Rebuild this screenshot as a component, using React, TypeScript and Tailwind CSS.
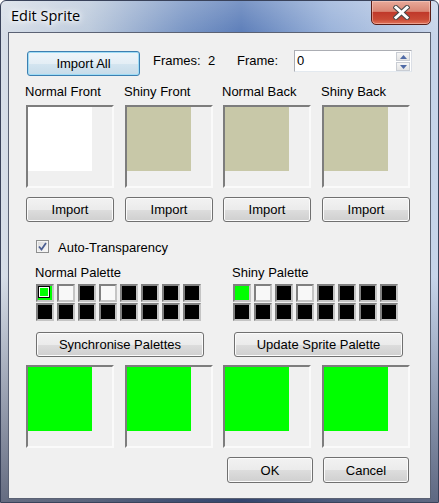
import React from "react";

const font = "font-['Liberation_Sans',Arial,sans-serif]";
const btnBase =
  "flex items-center justify-center rounded-[3px] border text-[13px] leading-[15px] text-black";
const btn = `${btnBase} border-[#707070] bg-[linear-gradient(to_bottom,#f2f2f2_0%,#ebebeb_50%,#dddddd_51%,#cfcfcf_100%)] shadow-[inset_0_0_0_1px_#fbfbfb]`;
const btnDefault = `${btnBase} border-[#3c7fb1] bg-[linear-gradient(to_bottom,#eef5fa_0%,#e4eef5_50%,#d4e5f0_51%,#c6dbe9_100%)] shadow-[inset_0_0_0_1px_#9fdcf5]`;

const columns = [
  { label: "Normal Front", top: "bg-white", ml: "ml-0" },
  { label: "Shiny Front", top: "bg-[#c8c8a8]", ml: "ml-[11px]" },
  { label: "Normal Back", top: "bg-[#c8c8a8]", ml: "ml-[10px]" },
  { label: "Shiny Back", top: "bg-[#c8c8a8]", ml: "ml-[11px]" },
];

const palette = [
  "bg-[#00ff00]", "bg-[#f8f8f8]", "bg-black", "bg-[#f8f8f8]", "bg-black", "bg-black", "bg-black", "bg-black",
  "bg-black", "bg-black", "bg-black", "bg-black", "bg-black", "bg-black", "bg-black", "bg-black",
];

function SpriteBox({ fill }: { fill: string }) {
  return (
    <div className="w-[88px] h-[83px] border-2 border-t-[#7d7d7d] border-l-[#7d7d7d] border-r-[#fafafa] border-b-[#fafafa] bg-[#f0f0f0]">
      <div className={`w-16 h-16 ${fill}`} />
    </div>
  );
}

function Palette({ selected }: { selected?: boolean }) {
  return (
    <div className="grid grid-cols-[repeat(8,18px)] gap-x-[3px] gap-y-px">
      {palette.map((c, i) => (
        <div
          key={i}
          className={`w-[18px] h-[18px] border-2 border-t-[#808080] border-l-[#808080] border-r-[#c4c4c4] border-b-[#c4c4c4] ${c}`}
        >
          {selected && i === 0 && (
            <div className="w-[12px] h-[12px] border border-black shadow-[inset_0_0_0_1px_#fff]" />
          )}
        </div>
      ))}
    </div>
  );
}

export default function App() {
  return (
    <div
      className={`${font} relative w-[439px] h-[503px] overflow-hidden rounded-t-[6px] border border-[#39425a] bg-[linear-gradient(to_bottom,rgba(255,255,255,0.2)_0%,rgba(255,255,255,0)_7%,rgba(0,0,0,0)_55%,rgba(25,32,60,0.6)_100%),linear-gradient(to_right,#d7dee8_0%,#bccadc_20%,#7794c4_42%,#5a7cb8_55%,#98b1d9_75%,#c8d5ea_100%)] pl-[7px] pt-[31px]`}
    >
      {/* title bar */}
      <div className="absolute left-[10px] top-[6px] font-['Open_Sans',sans-serif] text-[14.5px] leading-[18px] text-black [text-shadow:0_0_8px_#fff,0_0_12px_#fff,0_0_4px_#fff]">
        Edit Sprite
      </div>
      <div className="absolute left-[370px] top-[-1px] w-[60px] h-[25px] rounded-b-[5px] border border-[#5a1d16] bg-[linear-gradient(to_bottom,#e9aa9a_0%,#d98674_45%,#c0392a_50%,#c94a35_80%,#e2735a_100%)] shadow-[inset_0_0_0_1px_rgba(255,220,210,0.45)] flex items-center justify-center">
        <svg width="17" height="15" viewBox="0 0 17 15">
          <path d="M3 2.5 L14 12.5 M14 2.5 L3 12.5" stroke="#4a4a4a" strokeWidth="5" strokeLinecap="square" />
          <path d="M3 2.5 L14 12.5 M14 2.5 L3 12.5" stroke="#ffffff" strokeWidth="3" strokeLinecap="square" />
        </svg>
      </div>

      {/* client area */}
      <div className="w-[423px] h-[467px] border border-[#5b6274] bg-[#f0f0f0] flex flex-col">
        {/* top row */}
        <div className="flex items-start mt-[17px] pl-[18px] h-[26px]">
          <div className={`${btnDefault} mt-px w-[113px] h-[25px]`}>Import All</div>
          <div className="ml-[13px] mt-[3px] w-[84px] text-[13px] leading-[15px]">
            Frames:&nbsp; 2
          </div>
          <div className="mt-[3px] w-[57px] text-[13px] leading-[15px]">Frame:</div>
          <div className="relative w-[118px] h-[22px] border border-[#abadb3] border-b-[#e3e9ef] border-r-[#dbdfe6] bg-white pl-[2px] text-[13px] leading-[20px]">
            0
            <div className="absolute right-px top-px flex flex-col gap-px">
              {[0, 1].map((k) => (
                <div
                  key={k}
                  className="w-[14px] h-[9px] border border-[#c9cdd4] bg-[linear-gradient(to_bottom,#f6f6f6,#e4e4e4)] flex items-center justify-center"
                >
                  <svg width="7" height="4" viewBox="0 0 7 4">
                    <path d={k === 0 ? "M0 4 L3.5 0 L7 4 Z" : "M0 0 L3.5 4 L7 0 Z"} fill="#4f6aa6" />
                  </svg>
                </div>
              ))}
            </div>
          </div>
        </div>

        {/* sprites */}
        <div className="flex pl-[17px] mt-[8px]">
          {columns.map((c) => (
            <div key={c.label} className={`flex flex-col ${c.ml}`}>
              <div className="-ml-px text-[13px] leading-[15px] whitespace-nowrap">{c.label}</div>
              <div className="mt-[6px]">
                <SpriteBox fill={c.top} />
              </div>
              <div className={`${btn} mt-[9px] w-[88px] h-[25px]`}>Import</div>
            </div>
          ))}
        </div>

        {/* auto transparency */}
        <div className="flex items-start pl-[27px] mt-[18px]">
          <div className="w-[13px] h-[13px] border border-[#8e8f8f] bg-[linear-gradient(135deg,#d8d8d8,#fbfbfb)] shadow-[inset_0_0_0_1px_#f4f4f4] flex items-center justify-center">
            <svg width="9" height="9" viewBox="0 0 9 9">
              <path d="M1 4.5 L3.5 7.5 L8 1" fill="none" stroke="#4c5f92" strokeWidth="1.8" />
            </svg>
          </div>
          <div className="ml-[9px] text-[13px] leading-[15px]">Auto-Transparency</div>
        </div>

        {/* palettes */}
        <div className="flex mt-[10px]">
          <div className="flex flex-col pl-[27px] w-[224px]">
            <div className="-ml-px text-[13px] leading-[15px]">Normal Palette</div>
            <div className="mt-[4px]">
              <Palette selected />
            </div>
            <div className={`${btn} mt-[11px] w-[168px] h-[25px]`}>Synchronise Palettes</div>
          </div>
          <div className="flex flex-col">
            <div className="-ml-px text-[13px] leading-[15px]">Shiny Palette</div>
            <div className="mt-[4px]">
              <Palette />
            </div>
            <div className={`${btn} mt-[11px] ml-px w-[169px] h-[25px]`}>Update Sprite Palette</div>
          </div>
        </div>

        {/* previews */}
        <div className="flex pl-[17px] mt-[8px]">
          {columns.map((c) => (
            <div key={c.label} className={c.ml}>
              <SpriteBox fill="bg-[#00ff00]" />
            </div>
          ))}
        </div>

        {/* ok / cancel */}
        <div className="flex justify-end gap-[10px] pr-[21px] mt-[9px]">
          <div className={`${btn} w-[86px] h-[26px]`}>OK</div>
          <div className={`${btn} w-[86px] h-[26px]`}>Cancel</div>
        </div>
      </div>
    </div>
  );
}
